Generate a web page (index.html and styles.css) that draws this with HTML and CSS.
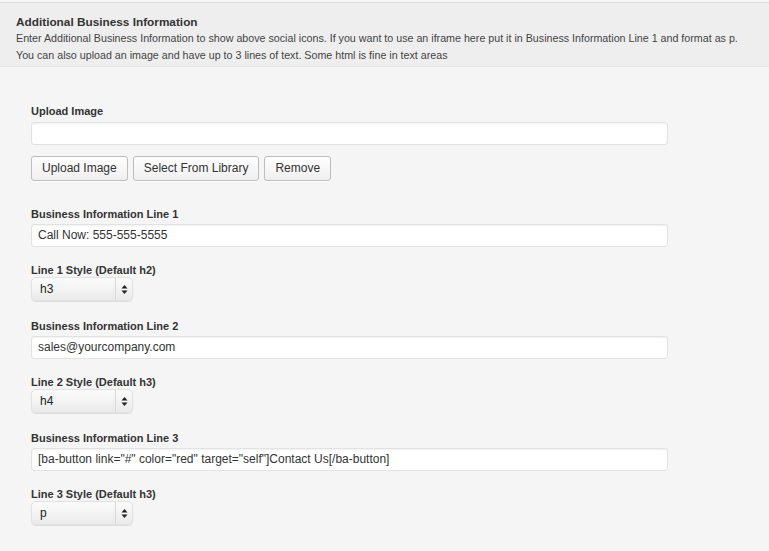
FILE: index.html
```html
<!DOCTYPE html>
<html>
<head>
<meta charset="utf-8">
<link rel="stylesheet" href="styles.css">
</head>
<body>
<div class="page">
  <div class="header">
    <h3 class="title">Additional Business Information</h3>
    <p class="desc">Enter Additional Business Information to show above social icons. If you want to use an iframe here put it in Business Information Line 1 and format as p.<br>You can also upload an image and have up to 3 lines of text. Some html is fine in text areas</p>
  </div>
  <div class="content">
    <div class="field upload">
      <label class="label">Upload Image</label>
      <div class="input"></div>
      <div class="buttons">
        <span class="btn">Upload Image</span>
        <span class="btn">Select From Library</span>
        <span class="btn">Remove</span>
      </div>
    </div>
    <div class="field">
      <label class="label">Business Information Line 1</label>
      <div class="input">Call Now: 555-555-5555</div>
    </div>
    <div class="field sel">
      <label class="label">Line 1 Style (Default h2)</label>
      <div class="select"><span class="val">h3</span><span class="arrows"><svg width="7" height="11" viewBox="0 0 7 11"><path d="M3.5 1 L6.5 4.5 L0.5 4.5 Z M3.5 10 L6.5 6.5 L0.5 6.5 Z" fill="#222"/></svg></span></div>
    </div>
    <div class="field">
      <label class="label">Business Information Line 2</label>
      <div class="input">sales@yourcompany.com</div>
    </div>
    <div class="field sel">
      <label class="label">Line 2 Style (Default h3)</label>
      <div class="select"><span class="val">h4</span><span class="arrows"><svg width="7" height="11" viewBox="0 0 7 11"><path d="M3.5 1 L6.5 4.5 L0.5 4.5 Z M3.5 10 L6.5 6.5 L0.5 6.5 Z" fill="#222"/></svg></span></div>
    </div>
    <div class="field">
      <label class="label">Business Information Line 3</label>
      <div class="input">[ba-button link="#" color="red" target="self"]Contact Us[/ba-button]</div>
    </div>
    <div class="field sel">
      <label class="label">Line 3 Style (Default h3)</label>
      <div class="select"><span class="val">p</span><span class="arrows"><svg width="7" height="11" viewBox="0 0 7 11"><path d="M3.5 1 L6.5 4.5 L0.5 4.5 Z M3.5 10 L6.5 6.5 L0.5 6.5 Z" fill="#222"/></svg></span></div>
    </div>
  </div>
</div>
</body>
</html>
```

FILE: styles.css
```css
html, body {
  margin: 0;
  padding: 0;
  background: #f5f5f5;
}
body {
  font-family: "Liberation Sans", Arial, sans-serif;
  color: #333;
  width: 769px;
  height: 551px;
  overflow: hidden;
}
.page {
  padding-top: 2px;
}
.header {
  background: #eeeeee;
  border-top: 1px solid #dcdcdc;
  border-bottom: 1px solid #e4e4e4;
  padding: 11px 16px 0 16px;
  height: 52px;
}
.title {
  margin: 0;
  font-size: 11.8px;
  font-weight: bold;
  line-height: 16px;
  color: #333;
}
.desc {
  margin: 0;
  font-size: 10.7px;
  line-height: 17px;
  color: #444;
  white-space: nowrap;
}
.content {
  padding: 37px 0 0 31px;
}
.field {
  width: 637px;
  margin-bottom: 16px;
}
.label {
  display: block;
  font-size: 11px;
  font-weight: bold;
  line-height: 14px;
  color: #333;
  margin-bottom: 3px;
}
.input {
  box-sizing: border-box;
  height: 23px;
  background: #fff;
  border: 1px solid #e2e2e2;
  border-radius: 3px;
  box-shadow: inset 0 1px 2px rgba(0,0,0,0.06);
  font-size: 12px;
  line-height: 21px;
  padding: 0 6px;
  color: #333;
  white-space: nowrap;
}
.upload {
  margin-bottom: 26px;
}
.upload .label {
  margin-bottom: 4px;
}
.buttons {
  display: flex;
  gap: 5px;
  margin-top: 11px;
}
.btn {
  box-sizing: border-box;
  height: 25px;
  padding: 0 10px;
  border: 1px solid #bdbdbd;
  border-radius: 3px;
  background: linear-gradient(#fefefe, #efefef);
  font-size: 12px;
  line-height: 23px;
  color: #333;
  box-shadow: 0 1px 0 rgba(255,255,255,0.8);
}
.sel {
  margin-bottom: 18px;
}
.select {
  box-sizing: border-box;
  width: 102px;
  height: 24px;
  display: flex;
  border-radius: 5px;
  border: 1px solid #e2e2e2;
  background: linear-gradient(#fbfbfb, #eaeaea);
  box-shadow: 0 1px 1px rgba(0,0,0,0.1);
  font-size: 12px;
  line-height: 22px;
  color: #222;
  margin-top: -3px;
}
.select .val {
  flex: 1;
  padding-left: 8px;
  border-right: 1px solid #d8d8d8;
}
.select .arrows {
  width: 16px;
  display: flex;
  align-items: center;
  justify-content: center;
}
.select .arrows svg {
  display: block;
}
```
